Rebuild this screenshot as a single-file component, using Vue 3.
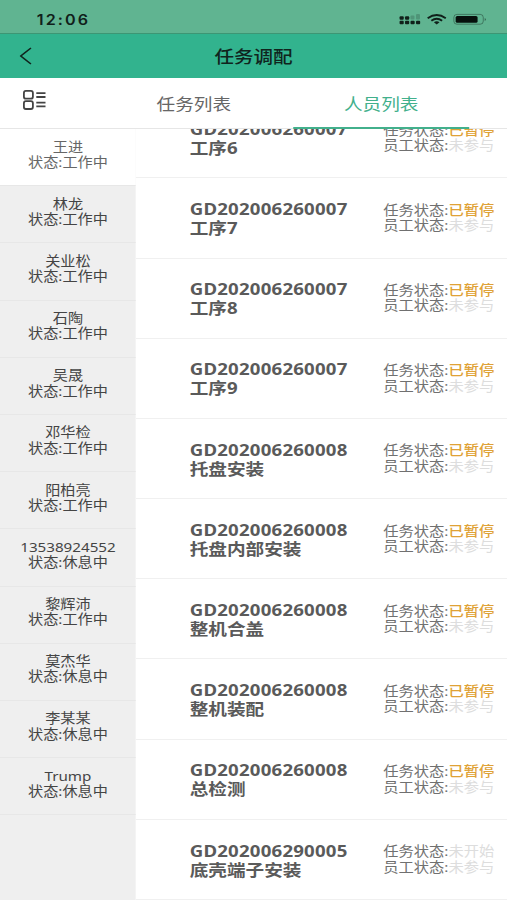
<template>
  <div class="page">
    <div class="status-bar">
      <span class="clock">12:06</span>
      <svg class="device" width="78" height="16" viewBox="0 0 90 16" preserveAspectRatio="none">
        <g fill="#10201a">
          <rect x="0.5" y="5.3" width="4.2" height="3.4" rx="1" />
          <rect x="0.5" y="9.8" width="4.2" height="3.4" rx="1" />
          <rect x="6" y="5.3" width="4.2" height="3.4" rx="1" />
          <rect x="6" y="9.8" width="4.2" height="3.4" rx="1" />
          <rect x="11.5" y="9.8" width="4.2" height="3.4" rx="1" />
          <rect x="17" y="9.8" width="4.2" height="3.4" rx="1" />
        </g>
        <g fill="#10201a" opacity="0.2">
          <rect x="11.5" y="4.5" width="4" height="4" rx="1" />
          <rect x="17" y="3" width="4" height="5.5" rx="1" />
        </g>
        <g fill="none" stroke="#10201a" stroke-width="1.9">
          <path d="M28.7 7.2 Q37.8 0.9 46.9 7.2" />
          <path d="M32.4 9.8 Q37.8 5.6 43.2 9.8" />
        </g>
        <path d="M35 11.2 Q37.8 9.3 40.6 11.2 L37.8 13.5 Z" fill="#10201a" />
        <rect x="55" y="3.4" width="29.5" height="9.8" rx="3" fill="none" stroke="#10201a" stroke-opacity="0.4" />
        <rect x="56.8" y="5" width="22" height="6.8" rx="1.6" fill="#06100c" />
        <path d="M86 6.9 Q88.2 8.4 86 9.9 Z" fill="#10201a" opacity="0.6" />
      </svg>
    </div>

    <div class="nav-bar">
      <svg class="back" width="11" height="18" viewBox="0 0 12 18" preserveAspectRatio="none">
        <path d="M10.8 1 L1.2 9 L10.8 17" fill="none" stroke="#10241d" stroke-width="1.6" />
      </svg>
      <span>任务调配</span>
    </div>

    <div class="tabs">
      <div class="menu">
        <svg width="20" height="20" viewBox="0 0 23 20" preserveAspectRatio="none">
          <g fill="none" stroke="#444" stroke-width="1.8">
            <rect x="0.9" y="0.9" width="9" height="7.8" rx="2" />
            <rect x="0.9" y="11.2" width="9" height="7.8" rx="2" />
            <path d="M13.3 3.2 H22.5 M13.3 7 H22.5 M13.3 12.6 H22.5 M13.3 16.4 H22.5" />
          </g>
        </svg>
      </div>
      <div class="tab">任务列表</div>
      <div class="tab active">人员列表</div>
    </div>

    <div class="content">
      <div class="staff-list">
        <div
          v-for="(item, index) in staff"
          :key="item.name"
          class="staff"
          :class="{ selected: index === current }"
          @click="current = index"
        >
          <div>{{ item.name }}</div>
          <div>状态:{{ item.state }}</div>
        </div>
      </div>

      <div class="task-list">
        <div v-for="item in tasks" :key="item.code + item.name" class="task">
          <div class="task-title">
            <div class="code">{{ item.code }}</div>
            <div>{{ item.name }}</div>
          </div>
          <div class="task-state">
            <div>任务状态:<span :class="item.state === '已暂停' ? 'paused' : 'idle'">{{ item.state }}</span></div>
            <div>员工状态:<span class="idle">未参与</span></div>
          </div>
        </div>
      </div>
    </div>
  </div>
</template>

<script setup>
import { ref } from 'vue'

const current = ref(0)

// 人员
const staff = [
  { name: '王进', state: '工作中' },
  { name: '林龙', state: '工作中' },
  { name: '关业松', state: '工作中' },
  { name: '石陶', state: '工作中' },
  { name: '吴晟', state: '工作中' },
  { name: '邓华检', state: '工作中' },
  { name: '阳柏亮', state: '工作中' },
  { name: '13538924552', state: '休息中' },
  { name: '黎辉沛', state: '工作中' },
  { name: '莫杰华', state: '休息中' },
  { name: '李某某', state: '休息中' },
  { name: 'Trump', state: '休息中' }
]

// 任务工序
const tasks = [
  { code: 'GD202006260007', name: '工序6', state: '已暂停' },
  { code: 'GD202006260007', name: '工序7', state: '已暂停' },
  { code: 'GD202006260007', name: '工序8', state: '已暂停' },
  { code: 'GD202006260007', name: '工序9', state: '已暂停' },
  { code: 'GD202006260008', name: '托盘安装', state: '已暂停' },
  { code: 'GD202006260008', name: '托盘内部安装', state: '已暂停' },
  { code: 'GD202006260008', name: '整机合盖', state: '已暂停' },
  { code: 'GD202006260008', name: '整机装配', state: '已暂停' },
  { code: 'GD202006260008', name: '总检测', state: '已暂停' },
  { code: 'GD202006290005', name: '底壳端子安装', state: '未开始' }
]
</script>

<style>
body {
  overflow: hidden;
  background: #fff;
}
</style>

<style scoped>
/* 横向拉伸 1.15 倍，铺满 507px */
.page {
  display: flex;
  flex-direction: column;
  width: 440.87px;
  height: 900px;
  overflow: hidden;
  background: #fff;
  color: #5a5a5a;
  font-family: "Noto Sans", "Noto Sans CJK SC", sans-serif;
  transform: scaleX(1.15);
  transform-origin: 0 0;
}

.page * {
  box-sizing: border-box;
}

.status-bar {
  display: flex;
  flex: none;
  align-items: center;
  justify-content: space-between;
  height: 34px;
  padding: 4px 16px 0 32px;
  background: #60b491;
  border-bottom: 1px solid #3d9674;
}

.clock {
  padding-top: 1px;
  color: #10201a;
  font-family: Inter, sans-serif;
  font-size: 14px;
  font-weight: 600;
  letter-spacing: 1.8px;
}

.nav-bar {
  display: grid;
  flex: none;
  grid-template-columns: 60px 1fr 60px;
  align-items: center;
  height: 44px;
  padding-bottom: 2px;
  background: #32b38e;
  color: #10241d;
  font-size: 17px;
  font-weight: 500;
  text-align: center;
}

.back {
  margin: 2px 0 0 17px;
}

.tabs {
  display: flex;
  flex: none;
  height: 51px;
  border-bottom: 1px solid #e6e6e6;
}

.menu {
  width: 87px;
  padding: 12px 0 0 20px;
}

.tab {
  width: 163px;
  height: 51px;
  color: #666;
  font-size: 16.2px;
  line-height: 52px;
  text-align: center;
}

.tab.active {
  width: 153px;
  margin-left: 5px;
  border-bottom: 2px solid #42b08c;
  color: #42b08c;
}

.content {
  display: flex;
  flex: 1;
  min-height: 0;
}

.staff-list {
  width: 118.2px;
  background: #efefef;
}

.staff {
  display: flex;
  flex-direction: column;
  justify-content: center;
  height: 57.2px;
  padding-bottom: 4.6px;
  border-bottom: 1px solid #e7e7e7;
  color: #444;
  font-size: 13.2px;
  line-height: 15.3px;
  text-align: center;
}

.staff.selected {
  background: #fff;
  color: #666;
}

.task-list {
  display: flex;
  flex: 1;
  flex-direction: column;
  justify-content: flex-end;
  overflow: hidden;
}

.task {
  display: flex;
  flex: none;
  align-items: center;
  justify-content: space-between;
  height: 80.2px;
  padding: 0 11px 0 46.8px;
  border-bottom: 1px solid #f0f0f0;
}

.task-title {
  padding-top: 2.4px;
  font-size: 16.2px;
  font-weight: 700;
  line-height: 19px;
}

.code {
  letter-spacing: 0.18px;
}

.task-state {
  padding-top: 0.6px;
  color: #707070;
  font-size: 13.3px;
  line-height: 15.3px;
}

.paused {
  color: #dfa236;
  font-weight: 500;
}

.idle {
  color: #ddd;
}
</style>
